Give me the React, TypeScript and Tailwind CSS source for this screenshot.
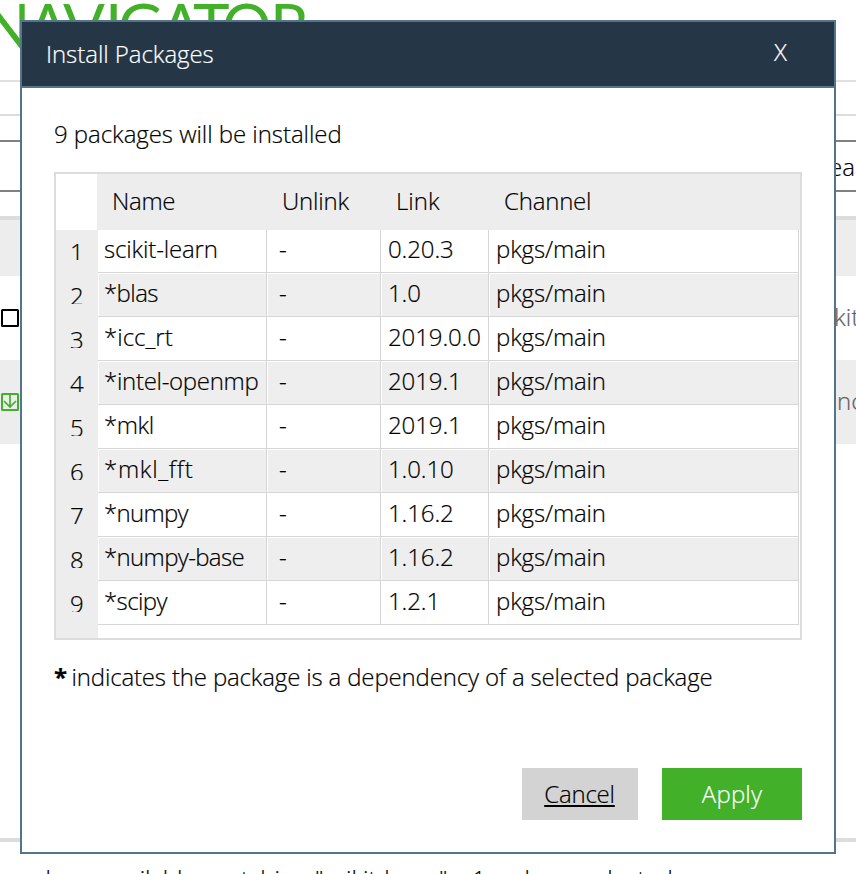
import type { ReactNode } from "react";

type Pkg = { name: string; link: string; spacing: string };

const packages: Pkg[] = [
  { name: "scikit-learn", link: "0.20.3", spacing: "tracking-[-0.15px]" },
  { name: "*blas", link: "1.0", spacing: "tracking-[-0.6px]" },
  { name: "*icc_rt", link: "2019.0.0", spacing: "tracking-[0px]" },
  { name: "*intel-openmp", link: "2019.1", spacing: "tracking-[-0.3px]" },
  { name: "*mkl", link: "2019.1", spacing: "tracking-[-0.4px]" },
  { name: "*mkl_fft", link: "1.0.10", spacing: "tracking-[0.7px]" },
  { name: "*numpy", link: "1.16.2", spacing: "tracking-[-0.7px]" },
  { name: "*numpy-base", link: "1.16.2", spacing: "tracking-[-0.65px]" },
  { name: "*scipy", link: "1.2.1", spacing: "tracking-[-0.6px]" },
];

function Navigator() {
  return (
    <svg className="block h-20 w-full shrink-0" viewBox="0 0 856 80" aria-label="Navigator">
      <text
        x="-17 27 63 105 118 160 193 222 270"
        y="49"
        fontFamily="Lato, sans-serif"
        fontWeight="400"
        fontSize="62"
        fill="#43b02a"
      >
        NAVIGATOR
      </text>
    </svg>
  );
}

function Background() {
  return (
    <div className="flex h-[874px] flex-col">
      <Navigator />
      <div className="h-0.5 shrink-0 bg-[#e0e0e0]" />
      <div className="h-8 shrink-0" />
      <div className="h-0.5 shrink-0 bg-[#dcdcdc]" />
      <div className="h-6 shrink-0" />
      <div className="flex h-[52px] shrink-0 items-center justify-end border-y-2 border-[#808080] pr-[1px] pt-[2px] text-black">
        <span>scikit-lea</span>
      </div>
      <div className="h-6 shrink-0" />
      <div className="h-1 shrink-0 bg-[#dcdcdc]" />
      <div className="h-14 shrink-0 bg-[#ededed]" />
      <div className="flex h-[84px] shrink-0 items-center justify-between text-[#606060]">
        <svg className="ml-px size-[18px]" viewBox="0 0 18 18" fill="none" stroke="#000" strokeWidth="2">
          <rect x="1" y="1" width="16" height="16" rx="0.5" />
        </svg>
        <span className="w-[22px] whitespace-nowrap pb-[2px] leading-8 tracking-[0.2px]">kit</span>
      </div>
      <div className="flex h-[84px] shrink-0 items-center justify-between bg-[#ededed] text-[#606060]">
        <svg className="ml-px size-[18px]" viewBox="0 0 18 18" fill="none" stroke="#43b02a" strokeWidth="2">
          <rect x="1" y="1" width="16" height="16" rx="0.5" />
          <path d="M9 1v13M3 8l6 6 6-6" strokeWidth="1.7" />
        </svg>
        <span className="w-[19px] whitespace-nowrap pb-[2px] leading-8">nc</span>
      </div>
      <div className="h-[394px] shrink-0" />
      <div className="h-1 shrink-0 bg-[#dcdcdc]" />
      <div className="flex h-8 shrink-0 overflow-hidden whitespace-pre pt-[19px] leading-9 text-black">
        <span className="ml-[8px] w-[96px] shrink-0 tracking-[-0.3px]">packages</span>
        <span className="w-[103px] shrink-0 tracking-[-0.2px]">available</span>
        <span className="w-[108px] shrink-0">matching</span>
        <span className="w-[157px] shrink-0">"scikit-learn"</span>
        <span className="w-[14px] shrink-0">1</span>
        <span className="w-[97px] shrink-0">package</span>
        <span>selected</span>
      </div>
    </div>
  );
}

function HeaderCell({ children }: { children: ReactNode }) {
  return <div className="pl-[15px]">{children}</div>;
}

function Cell({ shaded, spacing = "", children }: { shaded: boolean; spacing?: string; children: ReactNode }) {
  return (
    <div className="border-b border-r border-[#d6d6d6]">
      <div className={shaded ? "h-full border-l border-t border-white bg-[#eeeeee]" : "h-full border-l border-t border-transparent"}>
        <div className={`whitespace-nowrap ${spacing}`}>{children}</div>
      </div>
    </div>
  );
}

function PackageTable() {
  return (
    <div className="flex h-[468px] flex-col border-2 border-[#dcdcdc] bg-white">
      <div className="flex h-14 shrink-0 leading-[54px]">
        <div className="w-[41px] bg-white" />
        <div className="grid flex-1 grid-cols-[170px_114px_108px_1fr] bg-[#ededed]">
          <div className="pl-[15px] tracking-[-0.3px]">Name</div>
          <div className="pl-[15px] tracking-[-0.2px]">Unlink</div>
          <HeaderCell>Link</HeaderCell>
          <HeaderCell><span className="tracking-[-0.2px]">Channel</span></HeaderCell>
        </div>
      </div>
      <div className="flex flex-1">
        <div className="w-[42px] shrink-0 bg-[#ededed]">
          {packages.map((p, i) => (
            <div key={p.name} className="mb-[14px] h-[30px] overflow-hidden pl-[14px] leading-[44px]">
              {i + 1}
            </div>
          ))}
        </div>
        <div className="flex-1">
          {packages.map((p, i) => {
            const shaded = i % 2 === 1;
            return (
              <div
                key={p.name}
                className={`mr-px grid grid-cols-[169px_114px_108px_1fr] ${i === 0 ? "h-[43px] leading-[36px]" : "h-11 leading-[38px]"}`}
              >
                <Cell shaded={shaded} spacing={`pl-[5px] ${p.spacing}`}>{p.name}</Cell>
                <Cell shaded={shaded} spacing="pl-[11px]">-</Cell>
                <Cell shaded={shaded} spacing="pl-[6px] tracking-[-0.1px]">{p.link}</Cell>
                <Cell shaded={shaded} spacing="pl-[6px] tracking-[-0.15px]">pkgs/main</Cell>
              </div>
            );
          })}
        </div>
      </div>
    </div>
  );
}

function Dialog() {
  return (
    <div className="absolute left-5 top-5 flex h-[834px] w-[816px] flex-col border-2 border-[#52758a] bg-white">
      <div className="flex h-[66px] shrink-0 items-center justify-between border-b-2 border-[#52758a] bg-[#253746] pl-6 pr-[47px] text-white">
        <h1 className="tracking-[-0.05px]">Install Packages</h1>
        <button className="pb-1">X</button>
      </div>
      <div className="flex flex-1 flex-col px-8 pb-8">
        <p className="pt-7 leading-9 tracking-[-0.05px]">9 packages will be installed</p>
        <div className="mt-5">
          <PackageTable />
        </div>
        <p className="mt-[19px] whitespace-nowrap leading-9 tracking-[-0.16px]">
          <b className="mr-[-1.5px] font-bold">*</b> indicates the package is a dependency of a selected package
        </p>
        <div className="mt-auto flex justify-end gap-6">
          <button className="h-[52px] w-[116px] bg-[#d3d3d3] pb-px pr-px tracking-[-0.2px] underline decoration-2 underline-offset-2">
            Cancel
          </button>
          <button className="h-[52px] w-[140px] bg-[#43b02a] pb-px tracking-[0.2px] text-white">Apply</button>
        </div>
      </div>
    </div>
  );
}

export default function App() {
  return (
    <div className="relative h-[874px] w-[856px] overflow-hidden bg-white font-['Open_Sans',sans-serif] text-[24px] font-light text-black [-webkit-text-stroke:0.2px]">
      <Background />
      <Dialog />
    </div>
  );
}
